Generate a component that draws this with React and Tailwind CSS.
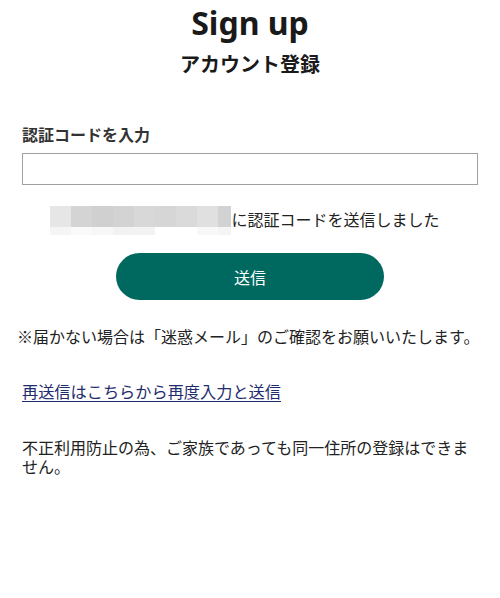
export default function App() {
  const jp = { fontFamily: '"Noto Sans CJK JP", "Noto Sans", sans-serif' };
  const top = ["bg-[#e6e6e6] w-[21px]", "bg-[#d4d4d4] w-[21px]", "bg-[#d0d0d0] w-[21px]", "bg-[#d3d3d3] w-[21px]", "bg-[#d8d8d8] w-[21px]", "bg-[#d6d6d6] w-[21px]", "bg-[#dadada] w-[21px]", "bg-[#e0e0e0] w-[21px]", "bg-[#d0d2d4] w-[13px]"];
  const bottom = ["bg-[#f5f5f5] w-[21px]", "bg-[#fafafa] w-[21px]", "bg-[#f7f7f7] w-[21px]", "bg-[#f2f2f2] w-[21px]", "bg-[#f3f3f3] w-[21px]", "bg-[#ffffff] w-[21px]", "bg-[#ffffff] w-[21px]", "bg-[#f8f8f8] w-[21px]", "bg-[#f5f5f5] w-[13px]"];
  return (
    <div className="w-[500px] h-[598px] bg-white text-[#222]" style={jp}>
      <div className="flex flex-col items-center">
        <h1 className="mt-[4px] text-[32px] leading-[38px] font-bold text-[#1a1a1a]" style={{ fontFamily: '"Noto Sans", "Noto Sans CJK JP", sans-serif' }}>
          Sign up
        </h1>
        <h2 className="mt-[8px] text-[20px] leading-[28px] font-bold text-[#1a1a1a]">アカウント登録</h2>
      </div>
      <div className="px-[22px]">
        <label className="block mt-[44px] text-[16px] leading-[24px] font-bold text-[#333]">認証コードを入力</label>
        <input type="text" className="block mt-[7px] w-full h-[32px] border border-[#a0a0a0] bg-white outline-none" />
        <div className="mt-[21px] flex justify-center items-start pr-[10px] ml-[-22px] mr-[-22px]">
          <div className="flex flex-col">
            <div className="flex h-[21px]">
              {top.map((c, i) => (
                <div key={i} className={c} />
              ))}
            </div>
            <div className="flex h-[8px]">
              {bottom.map((c, i) => (
                <div key={i} className={c} />
              ))}
            </div>
          </div>
          <span className="mt-[1px] text-[16px] leading-[24px] text-[#222]">に認証コードを送信しました</span>
        </div>
        <div className="mt-[18px] flex justify-center">
          <button className="w-[268px] h-[47px] rounded-full bg-[#00695f] text-white text-[16px] leading-[24px]">送信</button>
        </div>
        <p className="mt-[24px] ml-[-5px] text-[16px] leading-[24px] whitespace-nowrap text-[#222]">
          ※届かない場合は「迷惑メール」のご確認をお願いいたします。
        </p>
        <a href="#" className="block mt-[31px] text-[16.2px] leading-[24px] text-[#1f2c6e] underline underline-offset-[3px] w-fit">
          再送信はこちらから再度入力と送信
        </a>
        <p className="mt-[35px] text-[16px] leading-[19px] text-[#222]">
          不正利用防止の為、ご家族であっても同一住所の登録はできません。
        </p>
      </div>
    </div>
  );
}
